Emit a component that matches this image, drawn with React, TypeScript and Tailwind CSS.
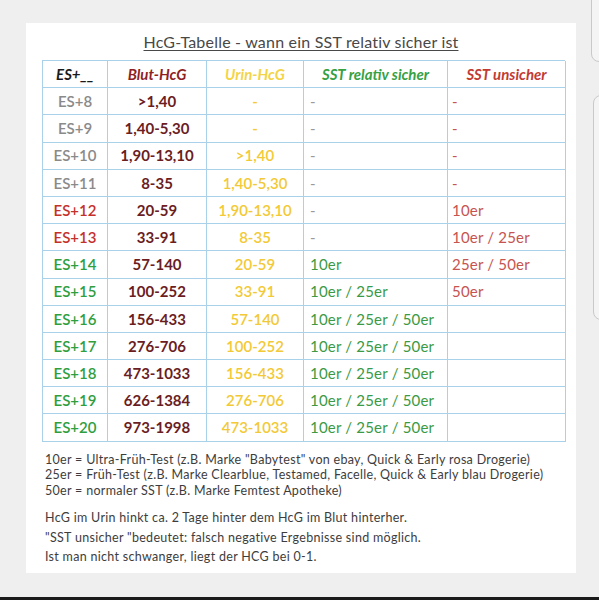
import React from 'react';

type Row = {
  es: string;
  esColor: string;
  blut: string;
  urin: string;
  sicher: string;
  unsicher: string;
};

const GRAY = 'text-[#8a8a8a]';
const RED = 'text-[#c4312b]';
const GREEN = 'text-[#2f9e3f]';

const rows: Row[] = [
  { es: 'ES+8', esColor: GRAY, blut: '>1,40', urin: '-', sicher: '-', unsicher: '-' },
  { es: 'ES+9', esColor: GRAY, blut: '1,40-5,30', urin: '-', sicher: '-', unsicher: '-' },
  { es: 'ES+10', esColor: GRAY, blut: '1,90-13,10', urin: '>1,40', sicher: '-', unsicher: '-' },
  { es: 'ES+11', esColor: GRAY, blut: '8-35', urin: '1,40-5,30', sicher: '-', unsicher: '-' },
  { es: 'ES+12', esColor: RED, blut: '20-59', urin: '1,90-13,10', sicher: '-', unsicher: '10er' },
  { es: 'ES+13', esColor: RED, blut: '33-91', urin: '8-35', sicher: '-', unsicher: '10er / 25er' },
  { es: 'ES+14', esColor: GREEN, blut: '57-140', urin: '20-59', sicher: '10er', unsicher: '25er / 50er' },
  { es: 'ES+15', esColor: GREEN, blut: '100-252', urin: '33-91', sicher: '10er / 25er', unsicher: '50er' },
  { es: 'ES+16', esColor: GREEN, blut: '156-433', urin: '57-140', sicher: '10er / 25er / 50er', unsicher: '' },
  { es: 'ES+17', esColor: GREEN, blut: '276-706', urin: '100-252', sicher: '10er / 25er / 50er', unsicher: '' },
  { es: 'ES+18', esColor: GREEN, blut: '473-1033', urin: '156-433', sicher: '10er / 25er / 50er', unsicher: '' },
  { es: 'ES+19', esColor: GREEN, blut: '626-1384', urin: '276-706', sicher: '10er / 25er / 50er', unsicher: '' },
  { es: 'ES+20', esColor: GREEN, blut: '973-1998', urin: '473-1033', sicher: '10er / 25er / 50er', unsicher: '' },
];

const cell = 'h-[27.2px] border-r border-b border-[#a9d1ea] flex items-center';

export default function App() {
  return (
    <div
      className="relative w-[599px] h-[600px] bg-[#efefef] overflow-hidden"
      style={{ fontFamily: 'Lato, "Open Sans", sans-serif' }}
    >
      {/* side widgets of the phone screen */}
      <div className="absolute left-[591px] top-[-20px] w-[20px] h-[82px] rounded-[8px] border border-[#c9c9c9] bg-[#f4f4f4]" />
      <div className="absolute left-[593px] top-[95px] w-[20px] h-[225px] rounded-[8px] border border-[#c9c9c9] bg-[#f4f4f4]" />

      <div className="ml-[26px] mt-[23px] w-[550px] h-[550px] bg-white pt-[9px]">
        <h1 className="text-center text-[16px] tracking-[0.2px] text-[#484848] underline underline-offset-2 leading-[20px]">
          HcG-Tabelle - wann ein SST relativ sicher ist
        </h1>

        <div className="ml-[16px] mt-[8px] w-[523px] grid grid-cols-[65px_99px_97px_144px_118px] border-l border-t border-[#a9d1ea]">
          <div className={`${cell} justify-center font-bold italic text-[15px] text-[#1a1a1a]`}>ES+__</div>
          <div className={`${cell} justify-center font-bold italic text-[15px] text-[#8f1f24]`}>Blut-HcG</div>
          <div className={`${cell} justify-center font-bold italic text-[15px] text-[#f4d447]`}>Urin-HcG</div>
          <div className={`${cell} justify-center font-bold italic text-[15px] text-[#36a143]`}>SST relativ sicher</div>
          <div className={`${cell} justify-center font-bold italic text-[15px] text-[#c23b33]`}>SST unsicher</div>

          {rows.map((r) => (
            <React.Fragment key={r.es}>
              <div className={`${cell} justify-center font-semibold text-[15px] ${r.esColor}`}>{r.es}</div>
              <div className={`${cell} justify-center font-bold text-[15px] text-[#6b1d1f]`}>{r.blut}</div>
              <div className={`${cell} justify-center font-semibold text-[15px] text-[#f2c936]`}>{r.urin}</div>
              <div
                className={`${cell} pl-[6px] text-[15px] tracking-[0.2px] ${r.sicher === '-' ? 'text-[#9a9a9a]' : 'text-[#3a9a45]'}`}
              >
                {r.sicher}
              </div>
              <div className={`${cell} pl-[4px] text-[15px] tracking-[0.2px] text-[#c65450]`}>{r.unsicher}</div>
            </React.Fragment>
          ))}
        </div>

        <div className="ml-[19px] mt-[10px] text-[12.5px] tracking-[0.3px] text-[#3d3d3d] leading-[15.5px]">
          <p>10er = Ultra-Früh-Test (z.B. Marke "Babytest" von ebay, Quick &amp; Early rosa Drogerie)</p>
          <p>25er = Früh-Test (z.B. Marke Clearblue, Testamed, Facelle, Quick &amp; Early blau Drogerie)</p>
          <p>50er = normaler SST (z.B. Marke Femtest Apotheke)</p>
          <p className="mt-[12px]">HcG im Urin hinkt ca. 2 Tage hinter dem HcG im Blut hinterher.</p>
          <p className="mt-[4px]">"SST unsicher "bedeutet: falsch negative Ergebnisse sind möglich.</p>
          <p className="mt-[4px]">Ist man nicht schwanger, liegt der HCG bei 0-1.</p>
        </div>
      </div>

      <div className="absolute left-0 bottom-0 w-full h-[3px] bg-[#1a1a1a]" />
    </div>
  );
}
